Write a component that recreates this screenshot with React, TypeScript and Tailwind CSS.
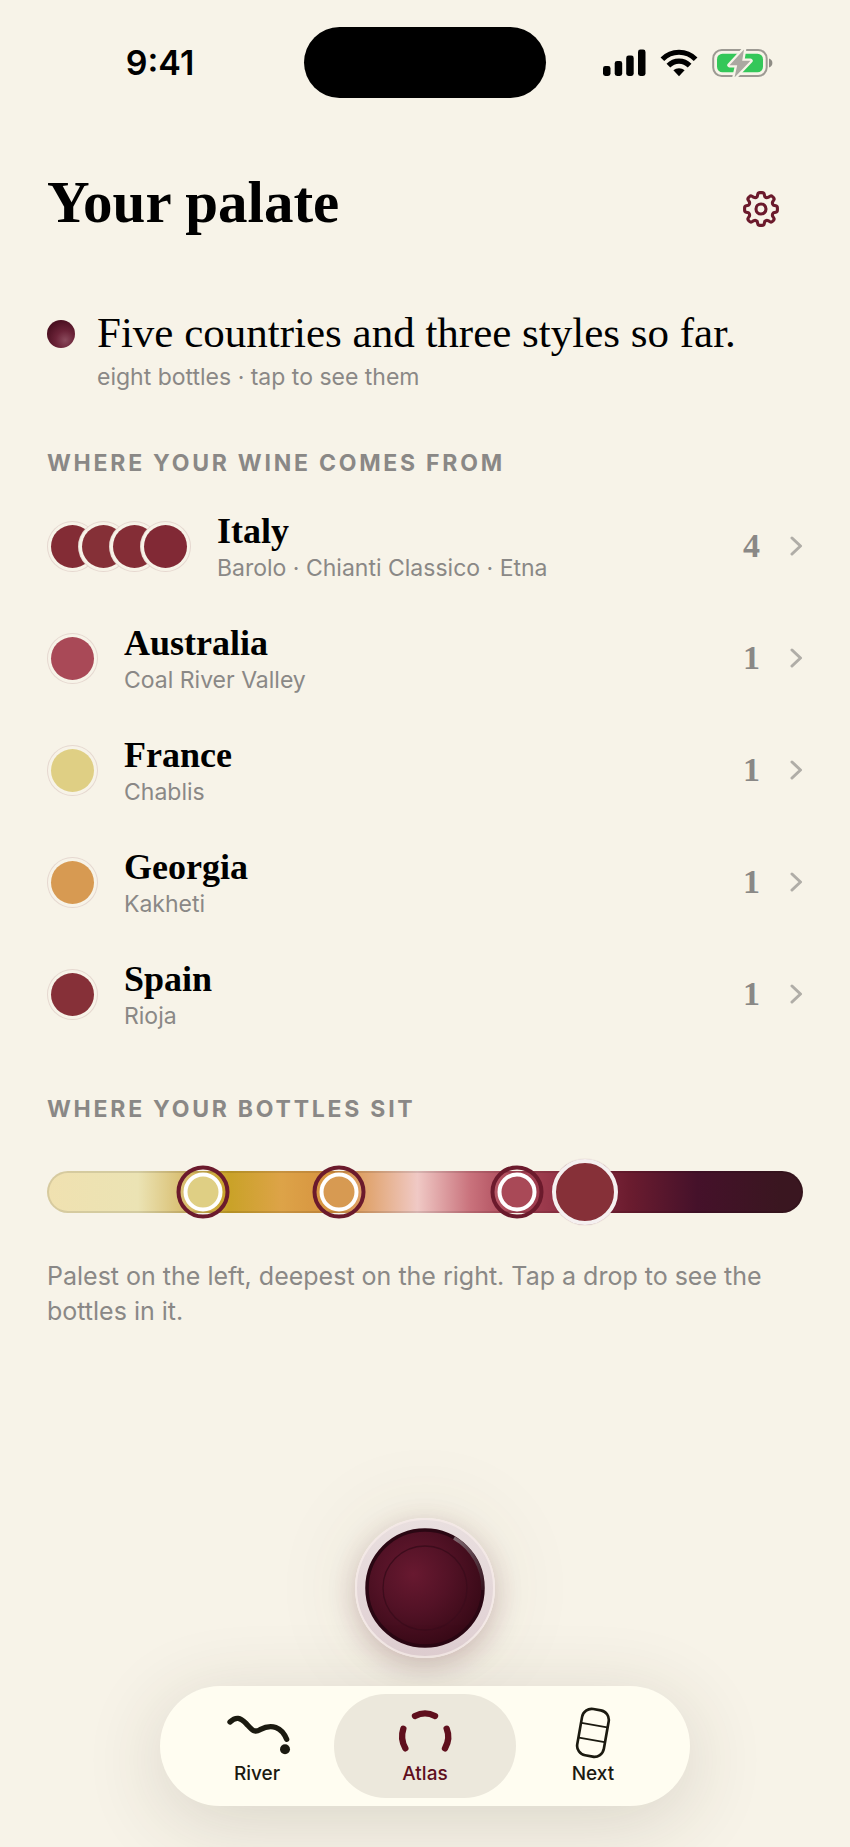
import clsx from "clsx";

interface Region {
  country: string;
  places: string;
  bottles: string[];
}

interface Drop {
  label: string;
  position: number;
  color: string;
  large?: boolean;
}

const regions: Region[] = [
  {
    country: "Italy",
    places: "Barolo · Chianti Classico · Etna",
    bottles: ["#832c35", "#853037", "#842d36", "#812935"],
  },
  { country: "Australia", places: "Coal River Valley", bottles: ["#a94957"] },
  { country: "France", places: "Chablis", bottles: ["#dfcf84"] },
  { country: "Georgia", places: "Kakheti", bottles: ["#d79a52"] },
  { country: "Spain", places: "Rioja", bottles: ["#863038"] },
];

const drops: Drop[] = [
  { label: "Pale white", position: 20.5, color: "#dfcf84" },
  { label: "Amber", position: 38.6, color: "#d79a52" },
  { label: "Light red", position: 62.2, color: "#a94957" },
  { label: "Deep red", position: 71.3, color: "#863038", large: true },
];

const StatusBar = () => (
  <div className="grid grid-cols-[1fr_242px_1fr] items-center pt-[27px]">
    <div className="pl-4 text-center text-[34px] leading-10 font-semibold">9:41</div>
    <div className="h-[71px] rounded-full bg-black" />
    <div className="flex items-center justify-center gap-[14px] pr-5">
      <svg className="h-7 w-[43px]" viewBox="0 0 43 28" aria-hidden="true">
        <rect x="0" y="17" width="7.5" height="10" rx="2.4" />
        <rect x="11.7" y="12" width="7.5" height="15" rx="2.4" />
        <rect x="23.2" y="6.5" width="7.5" height="20.5" rx="2.4" />
        <rect x="35" y="0.5" width="7.5" height="26.5" rx="2.4" />
      </svg>
      <svg className="h-7 w-[38px]" viewBox="0 0 38 28" aria-hidden="true">
        <g fill="none" stroke="#000" strokeWidth="5.2">
          <path d="M2.4 10.2C11.5 .9 26.5 .9 35.6 10.2" />
          <path d="M8.4 16.6C14.3 10.5 23.7 10.5 29.6 16.6" />
        </g>
        <path d="M13.4 21.3C16.5 18.5 21.5 18.5 24.6 21.3L19 27.2Z" />
      </svg>
      <svg className="h-7 w-[62px]" viewBox="0 0 62 28" aria-hidden="true">
        <rect x="1.2" y="1" width="53.5" height="26" rx="8.5" fill="none" stroke="#9d9a93" strokeWidth="2" />
        <path d="M57 9.5C61.5 10.5 61.5 17.5 57 18.5Z" fill="#8f8c85" />
        <rect x="5" y="4.7" width="46" height="18.6" rx="5.5" fill="#34c759" />
        <path
          d="M32 .5L17.5 16.2H25.2L22.5 28.5L38.5 11.8H30.2Z"
          fill="#aba8a1"
          stroke="#f7f3e8"
          strokeWidth="4.5"
          strokeLinejoin="round"
          paintOrder="stroke"
        />
      </svg>
    </div>
  </div>
);

const GearIcon = () => (
  <svg className="h-[38px] w-[38px]" viewBox="0 0 38 38" fill="none" stroke="#6b1a2c" strokeWidth="3.1" strokeLinejoin="round" aria-hidden="true">
    <circle cx="19" cy="19" r="5" />
    <path d="M15.8 4.2Q16.2 2.6 17.8 2.6H20.2Q21.8 2.6 22.2 4.2L22.8 6.6Q24.2 8.1 26.1 7.4L28 6.2Q29.3 5.4 30.4 6.5L31.5 7.6Q32.6 8.7 31.8 10L30.6 11.9Q29.9 13.8 31.4 15.2L33.8 15.8Q35.4 16.2 35.4 17.8V20.2Q35.4 21.8 33.8 22.2L31.4 22.8Q29.9 24.2 30.6 26.1L31.8 28Q32.6 29.3 31.5 30.4L30.4 31.5Q29.3 32.6 28 31.8L26.1 30.6Q24.2 29.9 22.8 31.4L22.2 33.8Q21.8 35.4 20.2 35.4H17.8Q16.2 35.4 15.8 33.8L15.2 31.4Q13.8 29.9 11.9 30.6L10 31.8Q8.7 32.6 7.6 31.5L6.5 30.4Q5.4 29.3 6.2 28L7.4 26.1Q8.1 24.2 6.6 22.8L4.2 22.2Q2.6 21.8 2.6 20.2V17.8Q2.6 16.2 4.2 15.8L6.6 15.2Q8.1 13.8 7.4 11.9L6.2 10Q5.4 8.7 6.5 7.6L7.6 6.5Q8.7 5.4 10 6.2L11.9 7.4Q13.8 8.1 15.2 6.6Z" />
  </svg>
);

const SectionTitle: React.FC<{ children: React.ReactNode }> = ({ children }) => (
  <h2 className="text-[23px] leading-8 font-bold tracking-[0.12em] text-[#8a8886] uppercase">{children}</h2>
);

const RegionRow: React.FC<{ region: Region }> = ({ region }) => (
  <li>
    <button type="button" className="flex h-28 w-full items-center text-left">
      <span className="mr-[26px] flex -space-x-5">
        {region.bottles.map((color, i) => (
          <span
            key={i}
            className="h-[51px] w-[51px] rounded-full border border-[#6b1a2c]/12 bg-[#f7f3e8] p-[3px]"
          >
            <span className="block h-full w-full rounded-full" style={{ backgroundColor: color }} />
          </span>
        ))}
      </span>
      <span className="flex-1 pt-0.5">
        <span className="block font-['Liberation_Serif',serif] text-[36px] leading-[42px] font-bold">{region.country}</span>
        <span className="block text-[23px] leading-8 text-[#8a8886]">{region.places}</span>
      </span>
      <span className="font-['Liberation_Serif',serif] text-[34px] leading-10 font-bold text-[#8a8886]">
        {region.bottles.length}
      </span>
      <svg className="ml-[30px] h-5 w-[13px]" viewBox="0 0 13 20" fill="none" stroke="#b0ada7" strokeWidth="3" strokeLinecap="round" strokeLinejoin="round" aria-hidden="true">
        <path d="M2 2L10.5 10L2 18" />
      </svg>
    </button>
  </li>
);

const Spectrum = () => (
  <div className="relative h-[42px] rounded-full border-2 border-black/10 bg-[linear-gradient(90deg,#f0e1b0_0%,#ebe3b4_12%,#d9bf72_18%,#c9a227_24%,#dda348_31%,#d6923f_38%,#e2a878_43%,#f0c9c5_49%,#c9727c_56%,#a84455_62%,#8f3044_69%,#6b1c2f_77%,#45112a_86%,#3a1620_97%)] bg-origin-border">
    {drops.map((drop) => (
      <button
        key={drop.label}
        type="button"
        aria-label={drop.label}
        className={clsx(
          "absolute top-1/2 -translate-x-1/2 -translate-y-1/2 rounded-full",
          drop.large
            ? "h-[66px] w-[66px] border-4 border-[#f5f0f0] shadow-[0_0_1px_rgba(107,26,44,0.4)]"
            : "h-[53px] w-[53px] border-4 border-[#6b1a2c] p-[3px]"
        )}
        style={{ left: `${drop.position}%`, backgroundColor: drop.large ? drop.color : undefined }}
      >
        {!drop.large && (
          <span className="block h-full w-full rounded-full border-4 border-white" style={{ backgroundColor: drop.color }} />
        )}
      </button>
    ))}
  </div>
);

const RiverIcon = () => (
  <svg className="h-[53px] w-[70px]" viewBox="248 111 210 159" aria-hidden="true">
    <path
      d="M272 156C290 139 303 143 320 160C337 178 344 190 362 179C397 160 427 171 442 208"
      fill="none"
      stroke="#1b1a10"
      strokeWidth="16"
      strokeLinecap="round"
    />
    <circle cx="437" cy="238" r="15" fill="#1b1a10" />
  </svg>
);

const AtlasIcon = () => (
  <svg className="h-[53px] w-[70px]" viewBox="-30 111 210 159" fill="none" stroke="#5f0f1d" strokeWidth="19" strokeLinecap="round" aria-hidden="true">
    <path d="M45 138Q75 122 105 138" />
    <path d="M10 176Q0 206 16 235" />
    <path d="M140 176Q152 206 135 235" />
  </svg>
);

const NextIcon = () => (
  <svg className="h-[53px] w-[70px]" viewBox="469 111 210 159" fill="none" stroke="#1b1a10" aria-hidden="true">
    <g transform="rotate(10 574 188)">
      <rect x="533.5" y="118" width="81" height="141" rx="29" strokeWidth="8" />
      <path d="M535 165H613M535 210H613" strokeWidth="5" />
    </g>
  </svg>
);

const tabs = [
  { name: "River", icon: RiverIcon },
  { name: "Atlas", icon: AtlasIcon, active: true },
  { name: "Next", icon: NextIcon },
];

const BottleButton = () => (
  <button
    type="button"
    aria-label="Add a bottle"
    className="h-[140px] w-[140px] rounded-full border-2 border-[#f3e8e6] bg-linear-to-b from-[#e9dfdf] to-[#e0d0d3] p-2 shadow-[0_8px_28px_rgba(90,20,40,0.22),0_0_90px_rgba(80,70,50,0.10)]"
  >
    <svg className="h-full w-full" viewBox="0 0 120 120" aria-hidden="true">
      <defs>
        <radialGradient id="wine" cx="0.4" cy="0.38" r="0.62">
          <stop offset="0" stopColor="#681930" />
          <stop offset="0.5" stopColor="#531226" />
          <stop offset="1" stopColor="#3a0a18" />
        </radialGradient>
        <linearGradient id="glint" x1="0" y1="0" x2="1" y2="1">
          <stop offset="0" stopColor="#fff" stopOpacity="0.4" />
          <stop offset="1" stopColor="#fff" stopOpacity="0.05" />
        </linearGradient>
      </defs>
      <circle cx="60" cy="60" r="58" fill="url(#wine)" stroke="#2a0713" strokeWidth="3.5" />
      <circle cx="60" cy="60" r="42" fill="none" stroke="#3d0c1c" strokeWidth="1.3" />
      <path d="M89 10A58 58 0 0 1 118 62" fill="none" stroke="url(#glint)" strokeWidth="3.5" />
    </svg>
  </button>
);

export default function App() {
  return (
    <div className="flex min-h-screen flex-col bg-[#f7f3e8] font-['Inter',sans-serif] text-black">
      <StatusBar />
      <main className="px-[47px]">
        <header className="flex items-start justify-between pt-[69px]">
          <h1 className="font-['Liberation_Serif',serif] text-[59px] leading-[70px] font-bold">Your palate</h1>
          <button type="button" aria-label="Settings" className="flex h-[84px] w-[84px] items-center justify-center">
            <GearIcon />
          </button>
        </header>

        <button type="button" className="mt-[53px] flex w-full items-start text-left">
          <span className="mt-4 mr-[22px] h-7 w-7 rounded-full bg-[radial-gradient(circle_at_65%_72%,#8a4a5c_0%,#6b2338_35%,#4a0f20_75%,#7d4a58_100%)]" />
          <span>
            <span className="block font-['Liberation_Serif',serif] text-[43px] leading-[57px]">
              Five countries and three styles so far.
            </span>
            <span className="block text-[23px] leading-8 text-[#8a8886]">eight bottles · tap to see them</span>
          </span>
        </button>

        <section className="mt-[54px]">
          <SectionTitle>Where your wine comes from</SectionTitle>
          <ul className="mt-[11px]">
            {regions.map((region) => (
              <RegionRow key={region.country} region={region} />
            ))}
          </ul>
        </section>

        <section className="mt-[43px]">
          <SectionTitle>Where your bottles sit</SectionTitle>
          <div className="mt-[46px]">
            <Spectrum />
          </div>
          <p className="mt-[46px] text-[25px] leading-[35px] text-[#8a8886]">
            Palest on the left, deepest on the right. Tap a drop to see the bottles in it.
          </p>
        </section>
      </main>

      <footer className="mt-auto flex flex-col items-center gap-7 pb-[41px]">
        <BottleButton />
        <nav className="flex h-[120px] items-center rounded-full bg-[#fffdf1] px-[13px] shadow-[0_14px_80px_rgba(60,50,30,0.16)]">
          {tabs.map(({ name, icon: Icon, active }) => (
            <a
              key={name}
              href={`#${name.toLowerCase()}`}
              className={clsx(
                "flex h-[104px] flex-col items-center justify-center rounded-full pt-0.5 text-[19px] leading-7 font-medium",
                active ? "-mx-[7px] w-[182px] bg-[#ece8dc] text-[#5f0f1d]" : "w-[168px] text-[#1b1a10]"
              )}
            >
              <Icon />
              {name}
            </a>
          ))}
        </nav>
      </footer>
    </div>
  );
}
